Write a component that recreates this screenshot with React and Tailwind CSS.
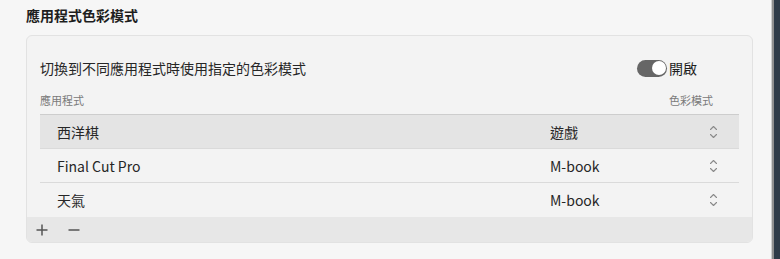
import React from "react";

const font = { fontFamily: '"Noto Sans CJK TC", "Noto Sans", sans-serif' };

function Chevrons() {
  return (
    <svg width="9" height="16" viewBox="0 0 9 16" fill="none" stroke="#8a8a8a" strokeWidth="1.1" strokeLinecap="round" strokeLinejoin="round">
      <path d="M1.5 5.5 L4.5 2.5 L7.5 5.5" />
      <path d="M1.5 10.5 L4.5 13.5 L7.5 10.5" />
    </svg>
  );
}

function Row({ name, mode, selected, last }) {
  return (
    <div
      className={`flex h-[34px] items-center ${selected ? "bg-[#e4e4e4]" : "bg-[#f3f3f3]"} ${last ? "" : "border-b border-[#dadada]"}`}
    >
      <div className="w-[510px] pl-[17px] text-[14px] leading-[18px] text-[#262626]">{name}</div>
      <div className="flex-1 text-[14px] leading-[18px] text-[#262626]">{mode}</div>
      <div className="mr-[21px] flex items-center">
        <Chevrons />
      </div>
    </div>
  );
}

export default function App() {
  return (
    <div className="flex h-[259px] w-[780px] bg-[#f6f6f6]" style={font}>
      <div className="flex-1">
        <div className="h-[35px] pl-[26px] pt-[6px] text-[14px] font-bold leading-[18px] text-[#1e1e1e]">
          應用程式色彩模式
        </div>
        <div className="ml-[26px] w-[727px] overflow-hidden rounded-[6px] border border-[#e2e2e2] bg-[#f3f3f3]">
          <div className="px-[13px]">
            <div className="flex h-[18px] items-center justify-between mt-[23px]">
              <div className="text-[14px] leading-[18px] text-[#262626]">切換到不同應用程式時使用指定的色彩模式</div>
              <div className="mr-[42px] flex items-center gap-[2px]">
                <div className="relative h-[17px] w-[30px] rounded-full bg-[#666666]">
                  <div className="absolute right-[1.5px] top-[1.5px] h-[14px] w-[14px] rounded-full bg-white" />
                </div>
                <div className="text-[14px] leading-[18px] text-[#1e1e1e]">開啟</div>
              </div>
            </div>
            <div className="mt-[15px] flex h-[17px] items-center justify-between text-[11px] leading-[17px] text-[#7a7a7a]">
              <div>應用程式</div>
              <div className="mr-[26px]">色彩模式</div>
            </div>
            <div className="mt-[5px] border-t border-[#cdcdcd]">
              <Row name="西洋棋" mode="遊戲" selected />
              <Row name="Final Cut Pro" mode="M-book" />
              <Row name="天氣" mode="M-book" last />
            </div>
          </div>
          <div className="flex h-[25px] items-center gap-[20px] bg-[#e7e7e7] pl-[9px]">
            <svg width="12" height="12" viewBox="0 0 12 12" stroke="#555" strokeWidth="1.5">
              <path d="M6 0.5 V11.5 M0.5 6 H11.5" />
            </svg>
            <svg width="12" height="12" viewBox="0 0 12 12" stroke="#555" strokeWidth="1.5">
              <path d="M0.5 6 H11.5" />
            </svg>
          </div>
        </div>
      </div>
      <div className="w-px bg-[#cfcfcf]" />
      <div className="w-[2px] bg-[#8f8f8f]" />
      <div className="w-[6px] bg-[#2f3b48]" />
    </div>
  );
}
